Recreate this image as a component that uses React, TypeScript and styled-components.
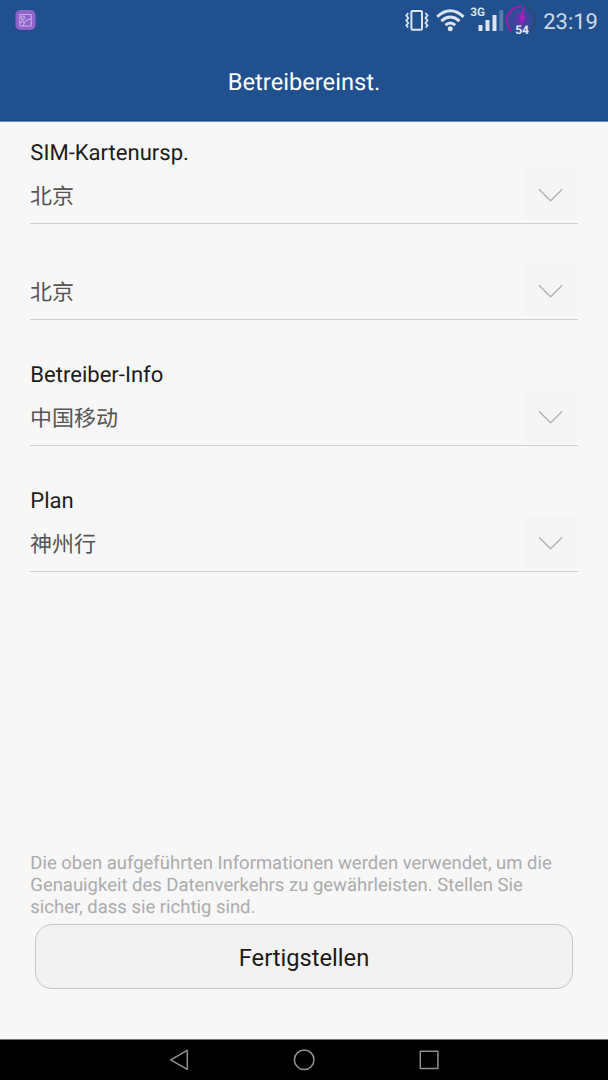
import React from 'react';
import styled, { createGlobalStyle } from 'styled-components';

const GlobalStyle = createGlobalStyle`
  * { box-sizing: border-box; }
  body {
    margin: 0;
    background: #f7f7f7;
    font-family: Roboto, "Noto Sans CJK SC", sans-serif;
    text-rendering: geometricPrecision;
  }
`;

const Screen = styled.div`
  width: 608px;
  height: 1080px;
  display: flex;
  flex-direction: column;
  overflow: hidden;
  background: #f7f7f7;
`;

const Header = styled.header`
  height: 122px;
  flex: none;
  background: #20508e;
  border-bottom: 1px solid #6d8fb9;
  box-shadow: inset 0 -1px 0 #174580;
`;

const StatusBar = styled.div`
  height: 42px;
  display: flex;
  justify-content: space-between;
  padding: 0 10px 0 15px;
`;

const StatusIcons = styled.div`
  display: flex;
`;

const Clock = styled.time`
  width: 60px;
  text-align: right;
  font-size: 22px;
  line-height: 45px;
  color: #d0dae6;
`;

const Title = styled.h1`
  margin: 0;
  text-align: center;
  font-size: 23.7px;
  font-weight: 400;
  line-height: 80px;
  color: #fff;
`;

const Form = styled.main`
  flex: 1;
  display: flex;
  flex-direction: column;
  padding: 18px 30px 50px;
`;

const Field = styled.section<{ $gap: number }>`
  width: 548px;
  margin-bottom: ${(p) => p.$gap}px;
`;

const Label = styled.div`
  height: 28px;
  padding: 1px 0 0 0.3px;
  font-size: 22.05px;
  line-height: 26px;
  color: #1c1c1c;
`;

const Select = styled.div`
  height: 56px;
  display: flex;
  justify-content: space-between;
  border-bottom: 1px solid #d0d0d0;
  font-size: 22px;
  line-height: 60px;
  color: #555;
`;

const ArrowBox = styled.span`
  width: 54px;
  height: 53px;
  display: block;
  background: #f5f5f5;
`;

const Note = styled.p`
  margin: auto 0 6px;
  padding-left: 0.3px;
  font-size: 18.48px;
  line-height: 22px;
  color: #acacac;
`;

const Button = styled.button`
  height: 65px;
  flex: none;
  margin: 0 5px;
  padding: 2px 0 0;
  border: 1px solid #c6c6c6;
  border-radius: 17px;
  background: #f2f2f2;
  font-family: inherit;
  font-size: 23.7px;
  color: #1a1a1a;
`;

const NavBar = styled.nav`
  height: 41px;
  flex: none;
  display: flex;
  justify-content: center;
  background: #000;
  border-top: 1px solid #777;
`;

const Svg = styled.svg`
  display: block;
  flex: none;
`;

const GalleryIcon = () => (
  <Svg width="21" height="42" viewBox="15 0 21 42" fill="none">
    <rect x="15.5" y="10" width="20" height="20" rx="5" fill="#8f62cc" />
    <g stroke="#c5b0e3" strokeWidth="1.1">
      <rect x="19.8" y="14.5" width="11.5" height="11.5" rx=".5" />
      <circle cx="22.8" cy="17.7" r="1.7" />
      <path d="M20 23.2 L22.5 21 L25 23.2 M23 26 C24 22 27 19.2 31 19" />
    </g>
  </Svg>
);

const SystemIcons = () => (
  <Svg width="136" height="42" viewBox="402 0 136 42" fill="none">
    <defs>
      <radialGradient id="glow">
        <stop offset="0" stopColor="#8020b8" stopOpacity=".85" />
        <stop offset="1" stopColor="#4848a0" stopOpacity=".2" />
      </radialGradient>
    </defs>
    <g stroke="#dce4ee">
      <rect x="411.4" y="10.9" width="10.6" height="18.8" rx="1.2" strokeWidth="2" />
      <path d="M408.3 13 l-2 2.5 2 2.5 -2 2.5 2 2.5 -2 2.5 1.8 2 M425.5 13 l2 2.5 -2 2.5 2 2.5 -2 2.5 2 2.5 -1.8 2" strokeWidth="1.8" />
      <path d="M437.2 16.8 Q450.3 4.8 463.6 16.8 M441.3 21.1 Q450.3 13 459.5 21.1 M445.4 25.1 Q450.3 20.8 455.3 25.1" strokeWidth="2.9" />
    </g>
    <g fill="#dce4ee">
      <circle cx="450.3" cy="28.7" r="2.5" />
      <rect x="478.5" y="25" width="4" height="6" rx=".6" />
      <rect x="485.5" y="20" width="4" height="11" rx=".6" />
      <rect x="492.5" y="15" width="4" height="16" rx=".6" />
      <rect x="499.3" y="10" width="4" height="21" rx=".6" opacity=".3" />
    </g>
    <text x="470.3" y="15.5" fill="#dce4ee" fontFamily="Roboto, sans-serif" fontSize="11.7" fontWeight="700">3G</text>
    <circle cx="521" cy="20" r="13" fill="url(#glow)" />
    <path d="M523 6.5 A13.5 13.5 0 0 1 531.5 29" stroke="#304968" strokeWidth="1.4" />
    <path d="M512 31 A13.8 13.8 0 0 1 521 6.5" stroke="#9c1eb0" strokeWidth="2" />
    <path d="M524.6 5 L519.3 19 L521.8 19.5 L520.5 25 L525.4 17.2 L523.2 16.8 Z" fill="#a820bd" stroke="#a820bd" strokeWidth=".5" />
    <text x="515.2" y="33.8" fill="#e4e4f0" fontFamily="Roboto, sans-serif" fontSize="12" fontWeight="700">54</text>
  </Svg>
);

const Chevron = () => (
  <ArrowBox>
    <Svg width="54" height="53" fill="none">
      <path d="M15 21.3 L26.6 32.8 L38.2 21.3" stroke="#b0b0b0" strokeWidth="1.2" />
    </Svg>
  </ArrowBox>
);

const NavIcons = () => (
  <Svg width="310" height="40" viewBox="149 1040 310 40" fill="none" stroke="#909090" strokeWidth="1.5" strokeLinejoin="round">
    <path d="M170.7 1059.8 L187.3 1050.3 V1069.3 Z" />
    <circle cx="304.2" cy="1059.8" r="9.8" />
    <rect x="420.3" y="1051.2" width="17.6" height="17.2" />
  </Svg>
);

const fields = [
  { label: 'SIM-Kartenursp.', value: '北京', gap: 40 },
  { label: '', value: '北京', gap: 42 },
  { label: 'Betreiber-Info', value: '中国移动', gap: 42 },
  { label: 'Plan', value: '神州行', gap: 0 },
];

export default function App() {
  return (
    <>
      <GlobalStyle />
      <Screen>
        <Header>
          <StatusBar>
            <GalleryIcon />
            <StatusIcons>
              <SystemIcons />
              <Clock>23:19</Clock>
            </StatusIcons>
          </StatusBar>
          <Title>Betreibereinst.</Title>
        </Header>
        <Form>
          {fields.map((f, i) => (
            <Field key={i} $gap={f.gap}>
              {f.label && <Label>{f.label}</Label>}
              <Select>
                <span>{f.value}</span>
                <Chevron />
              </Select>
            </Field>
          ))}
          <Note>
            Die oben aufgeführten Informationen werden verwendet, um die Genauigkeit des Datenverkehrs zu gewährleisten. Stellen Sie sicher, dass sie richtig sind.
          </Note>
          <Button>Fertigstellen</Button>
        </Form>
        <NavBar>
          <NavIcons />
        </NavBar>
      </Screen>
    </>
  );
}
